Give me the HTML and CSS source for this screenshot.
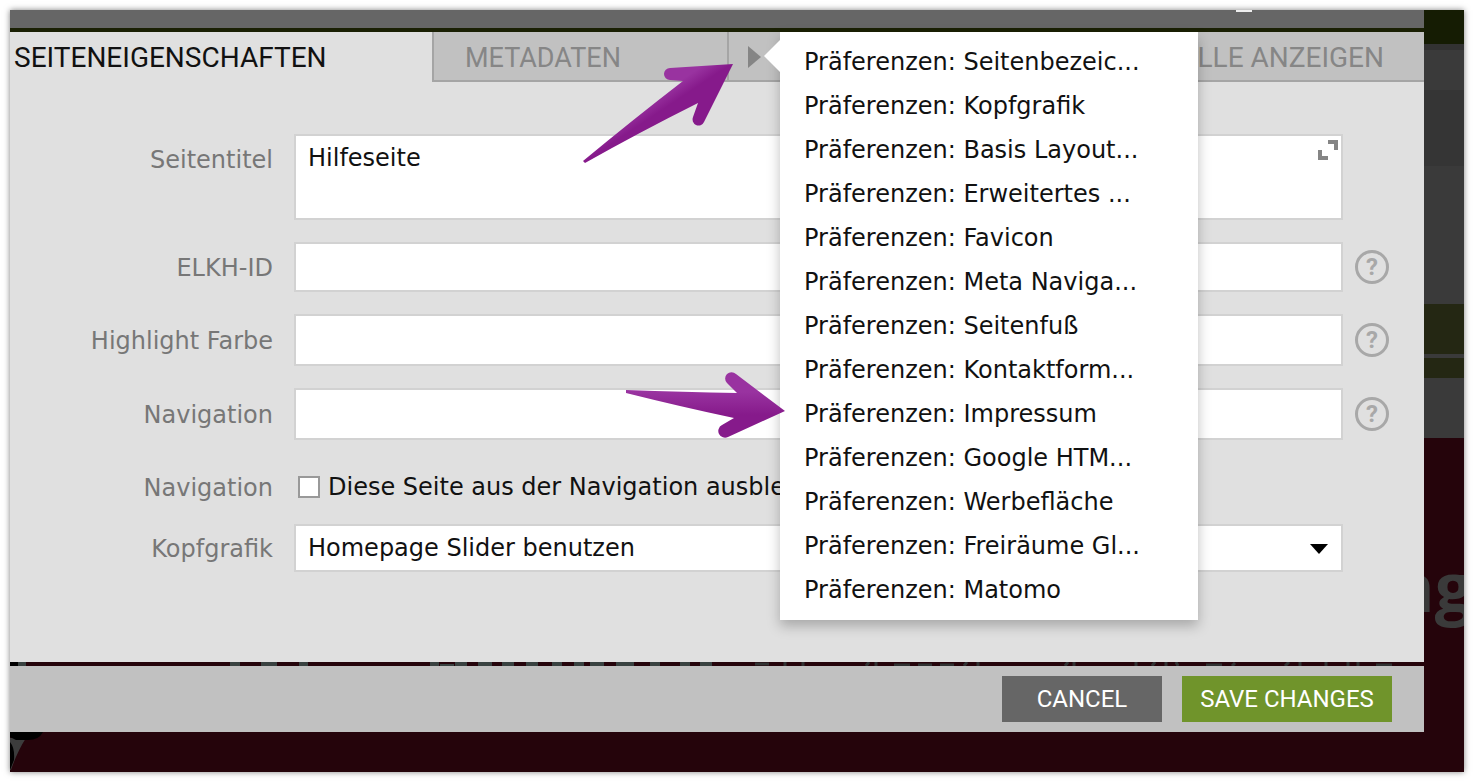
FILE: index.html
```html
<!DOCTYPE html>
<html lang="de">

<head>
  <meta charset="UTF-8">
  <meta name="viewport" content="width=device-width, initial-scale=1.0">
  <title>Seiteneigenschaften</title>
  <link rel="stylesheet" href="styles.css">
</head>

<body>

  <div class="screen">

    <div class="dialog">
      <div class="titlebar"><span class="titlebar-mark"></span></div>

      <div class="tabs">
        <button class="tab active">SEITENEIGENSCHAFTEN</button>
        <button class="tab meta">METADATEN</button>
        <div class="more">
          <button class="tab more-button" aria-label="Weitere Tabs">
            <svg width="14" height="22" viewBox="0 0 14 22"><path d="M0 0 L13 11 L0 22 Z" fill="#858585"/></svg>
          </button>
          <ul class="menu">
            <li><a href="#">Präferenzen: Seitenbezeic...</a></li>
            <li><a href="#">Präferenzen: Kopfgrafik</a></li>
            <li><a href="#">Präferenzen: Basis Layout...</a></li>
            <li><a href="#">Präferenzen: Erweitertes ...</a></li>
            <li><a href="#">Präferenzen: Favicon</a></li>
            <li><a href="#">Präferenzen: Meta Naviga...</a></li>
            <li><a href="#">Präferenzen: Seitenfuß</a></li>
            <li><a href="#">Präferenzen: Kontaktform...</a></li>
            <li><a href="#">Präferenzen: Impressum</a></li>
            <li><a href="#">Präferenzen: Google HTM...</a></li>
            <li><a href="#">Präferenzen: Werbefläche</a></li>
            <li><a href="#">Präferenzen: Freiräume Gl...</a></li>
            <li><a href="#">Präferenzen: Matomo</a></li>
          </ul>
        </div>
        <button class="tab all">ALLE ANZEIGEN</button>
      </div>

      <form class="form" id="props">
        <div class="row">
          <label class="label top" for="title">Seitentitel</label>
          <div class="field">
            <textarea class="input area" id="title">Hilfeseite</textarea>
            <svg class="expand" width="20" height="20" viewBox="0 0 20 20" fill="none" stroke="#858585" stroke-width="4">
              <path d="M10 2 H18 V10 M2 10 V18 H10"/>
            </svg>
          </div>
        </div>
        <div class="row">
          <label class="label" for="elkh">ELKH-ID</label>
          <input class="input" type="text" id="elkh">
          <button class="help" type="button">?</button>
        </div>
        <div class="row">
          <label class="label" for="farbe">Highlight Farbe</label>
          <input class="input tall" type="text" id="farbe">
          <button class="help" type="button">?</button>
        </div>
        <div class="row">
          <label class="label" for="nav">Navigation</label>
          <input class="input tall" type="text" id="nav">
          <button class="help" type="button">?</button>
        </div>
        <div class="row check-row">
          <span class="label">Navigation</span>
          <label class="check"><input class="box" type="checkbox">Diese Seite aus der Navigation ausblenden</label>
        </div>
        <div class="row">
          <label class="label" for="kopf">Kopfgrafik</label>
          <div class="field">
            <select class="input select" id="kopf">
              <option>Homepage Slider benutzen</option>
            </select>
            <svg class="caret" width="18" height="10" viewBox="0 0 18 10"><path d="M0 0 H18 L9 10 Z"/></svg>
          </div>
        </div>
      </form>

      <!-- strip of the page between form and footer -->
      <div class="gap">
        <svg width="1414" height="4" viewBox="0 0 1414 4">
          <path d="M0 0 H8 V4 H0 Z" fill="#000"/>
          <path d="M8 0h8v4h-8z M220 0h10v4h-10z M251 0h16v4h-16z M289 0h9v4h-9z M420 0h9v4h-9z M430 2h14v2h-14z M445 0h12v4h-12z M468 0h14v4h-14z M492 0h12v4h-12z M516 0h12v4h-12z M542 0h10v4h-10z M564 0h10v4h-10z M580 0h14v4h-14z M606 0h18v4h-18z M640 0h10v4h-10z M670 0h10v4h-10z M690 0h12v4h-12z" fill="#394241"/>
          <path d="M745 2h14 M775 0v4 M793 0v4 M856 4l3-4 M866 0v4 M884 3h16 M908 3h14 M930 3h14 M954 4l3-4 M968 0v4 M1055 4l3-4 M1064 0v4 M1126 0v4 M1142 4l3-4 M1156 0v4 M1166 0l2 4 M1196 3h16 M1222 4l3-3 M1275 4l4-4 M1290 0v4 M1316 0v4 M1338 0v4 M1348 0v4 M1366 3h16" fill="none" stroke="#303232" stroke-width="3"/>
        </svg>
      </div>

      <div class="footer">
        <button class="button cancel">CANCEL</button>
        <button class="button save" form="props">SAVE CHANGES</button>
      </div>
      <div class="under">
        <svg width="40" height="40" viewBox="0 0 40 40">
          <path d="M0 6 H16 Q7 20 1 38 L0 38 Z" fill="#3c3c3c"/>
          <path d="M0 0 H33 Q29 8 18 8 H6 L0 5 Z M0 10 Q5 16 4 28 L0 38 Z"/>
        </svg>
      </div>
    </div>

    <div class="side">
      <div class="band header"></div>
      <div class="band line"></div>
      <div class="band one"></div>
      <div class="band two"></div>
      <div class="band three"></div>
      <div class="band olive big"></div>
      <div class="band four"></div>
      <div class="band olive"></div>
      <div class="band five"></div>
      <div class="side-text">ng</div>
    </div>

    <svg class="pointer first" width="174" height="114" viewBox="0 0 174 114">
      <defs>
        <linearGradient id="g1" gradientUnits="userSpaceOnUse" x1="100" y1="34" x2="116" y2="58">
          <stop offset="0.1" stop-color="#9933a0"/>
          <stop offset="0.6" stop-color="#861a8b"/>
        </linearGradient>
      </defs>
      <path d="M163 14 L100 18 A6 6 0 0 0 100 30 L113 31 Q65 68 13 111 L15 113 Q70 82 128 53 L123 67 A6 6 0 0 0 134 72 Z" fill="url(#g1)"/>
    </svg>
    <svg class="pointer second" width="172" height="78" viewBox="0 0 172 78">
      <defs>
        <linearGradient id="g2" x1="0" y1="0" x2="0" y2="1">
          <stop offset="0.3" stop-color="#9933a0"/>
          <stop offset="0.65" stop-color="#861a8b"/>
        </linearGradient>
      </defs>
      <path d="M171 51 L122 14 A6 6 0 0 0 113 23 L123 33 Q70 32 12 30 V33 Q68 47 120 58 L108 65 A6 6 0 0 0 114 77 Z" fill="url(#g2)"/>
    </svg>

  </div>

</body>

</html>
```

FILE: styles.css
```css
* {
  box-sizing: border-box;
}

body {
  margin: 0;
  padding: 10px;
  background-color: #fff;
  font-family: "DejaVu Sans", Verdana, sans-serif;
  font-size: 24px;
  color: #111;
}

button,
input,
textarea,
select {
  font: inherit;
  color: inherit;
  border-radius: 0;
}

svg {
  display: block;
}

.screen {
  position: relative;
  display: flex;
  background-color: #25040b;
  box-shadow: 0 0 6px rgba(0, 0, 0, 0.5);
}

.dialog {
  flex: 1;
  min-width: 0;
}

.titlebar {
  display: flex;
  justify-content: flex-end;
  height: 22px;
  padding-right: 172px;
  background-color: #666;
  border-bottom: 4px solid #1a2004;
}

.titlebar-mark {
  width: 16px;
  height: 2px;
  background-color: #eee;
}

/* tabs */
.tabs {
  display: flex;
  height: 50px;
  background-color: #c1c1c1;
}

.tab {
  height: 50px;
  padding: 4px 32px 0 31px;
  border: 0;
  border-bottom: 2px solid #a5a5a5;
  background-color: #c1c1c1;
  color: #868686;
  font-family: Roboto, sans-serif;
  font-size: 27px;
  line-height: 44px;
  text-align: left;
  white-space: nowrap;
}

.active {
  flex: 0 0 422px;
  padding-left: 4px;
  border-bottom-color: #e0e0e0;
  background-color: #e0e0e0;
  color: #111;
  font-size: 28px;
}

.meta {
  flex: 0 0 295px;
  border-left: 2px solid #a5a5a5;
}

.more {
  position: relative;
  flex: 0 0 60px;
}

.more-button {
  width: 100%;
  padding: 2px 0 0 19px;
  border-left: 2px solid #a5a5a5;
}

.all {
  flex: 1;
  padding-right: 40px;
  font-size: 28px;
  text-align: right;
}

.menu {
  position: absolute;
  z-index: 1;
  top: 0;
  left: 53px;
  width: 418px;
  margin: 0;
  padding: 8px 0;
  list-style: none;
  background-color: #fff;
  box-shadow: 0 6px 12px rgba(0, 0, 0, 0.25);
}

.menu::before {
  content: "";
  position: absolute;
  top: 8px;
  left: -16px;
  border: 16px solid transparent;
  border-left: 0;
  border-right-color: #fff;
}

.menu a {
  display: block;
  padding: 0 24px;
  color: #111;
  line-height: 44px;
  text-decoration: none;
  white-space: nowrap;
}

/* form */
.form {
  display: flex;
  flex-direction: column;
  gap: 22px;
  padding: 52px 0 90px;
  background-color: #e0e0e0;
}

.row {
  display: grid;
  grid-template-columns: 263px 1fr 60px;
  column-gap: 21px;
  align-items: center;
}

.label {
  padding-top: 2px;
  color: #777;
  text-align: right;
}

.top {
  align-self: start;
  padding-top: 12px;
}

.field {
  position: relative;
}

.input {
  display: block;
  width: 100%;
  height: 50px;
  margin: 0;
  padding: 0 12px;
  border: 2px solid #d2d2d2;
  background-color: #fff;
}

.tall {
  height: 52px;
}

.area {
  height: 86px;
  padding-top: 8px;
  resize: none;
}

.expand {
  position: absolute;
  top: 6px;
  right: 5px;
}

.select {
  height: 48px;
  appearance: none;
}

.caret {
  position: absolute;
  top: 20px;
  right: 15px;
}

.help {
  width: 34px;
  height: 34px;
  margin-left: -9px;
  padding: 0;
  border: 3px solid #a8a8a8;
  border-radius: 50%;
  background: none;
  color: #a8a8a8;
  font-family: Roboto, sans-serif;
  font-size: 24px;
  font-weight: bold;
  line-height: 28px;
}

.check-row {
  height: 40px;
  padding-top: 10px;
}

.check {
  display: flex;
  align-items: center;
  gap: 8px;
  padding-left: 4px;
  white-space: nowrap;
}

.box {
  width: 22px;
  height: 22px;
  margin: 0;
  border: 2px solid #999;
  background-color: #fff;
  appearance: none;
}

.gap {
  height: 4px;
  overflow: hidden;
}

/* footer */
.footer {
  display: flex;
  justify-content: flex-end;
  gap: 20px;
  padding: 10px 32px;
  background-color: #c1c1c1;
}

.button {
  width: 160px;
  height: 46px;
  padding: 0;
  border: 0;
  background-color: #666;
  color: #fff;
  font-family: Roboto, sans-serif;
  font-size: 24px;
}

.save {
  width: 210px;
  background-color: #70942b;
}

/* page behind the dialog */
.side {
  flex: 0 0 40px;
  overflow: hidden;
}

.band {
  height: 20px;
  background-color: #3a3a3a;
}

.header {
  height: 34px;
  background-color: #151c03;
}

.line {
  height: 6px;
  background-color: #323232;
}

.one {
  height: 40px;
}

.two {
  height: 76px;
  background-color: #353535;
}

.three {
  height: 138px;
}

.olive {
  background-color: #242713;
}

.big {
  height: 50px;
}

.four {
  height: 4px;
}

.five {
  height: 60px;
}

.side-text {
  margin-top: 102px;
  margin-left: -34px;
  color: #3a3a3a;
  font-family: "Open Sans", sans-serif;
  font-size: 68px;
  font-weight: bold;
  line-height: 92px;
}

/* arrows drawn over the dialog */
.pointer {
  position: absolute;
  z-index: 2;
}

.first {
  top: 40px;
  left: 560px;
}

.second {
  top: 350px;
  left: 604px;
}
```
